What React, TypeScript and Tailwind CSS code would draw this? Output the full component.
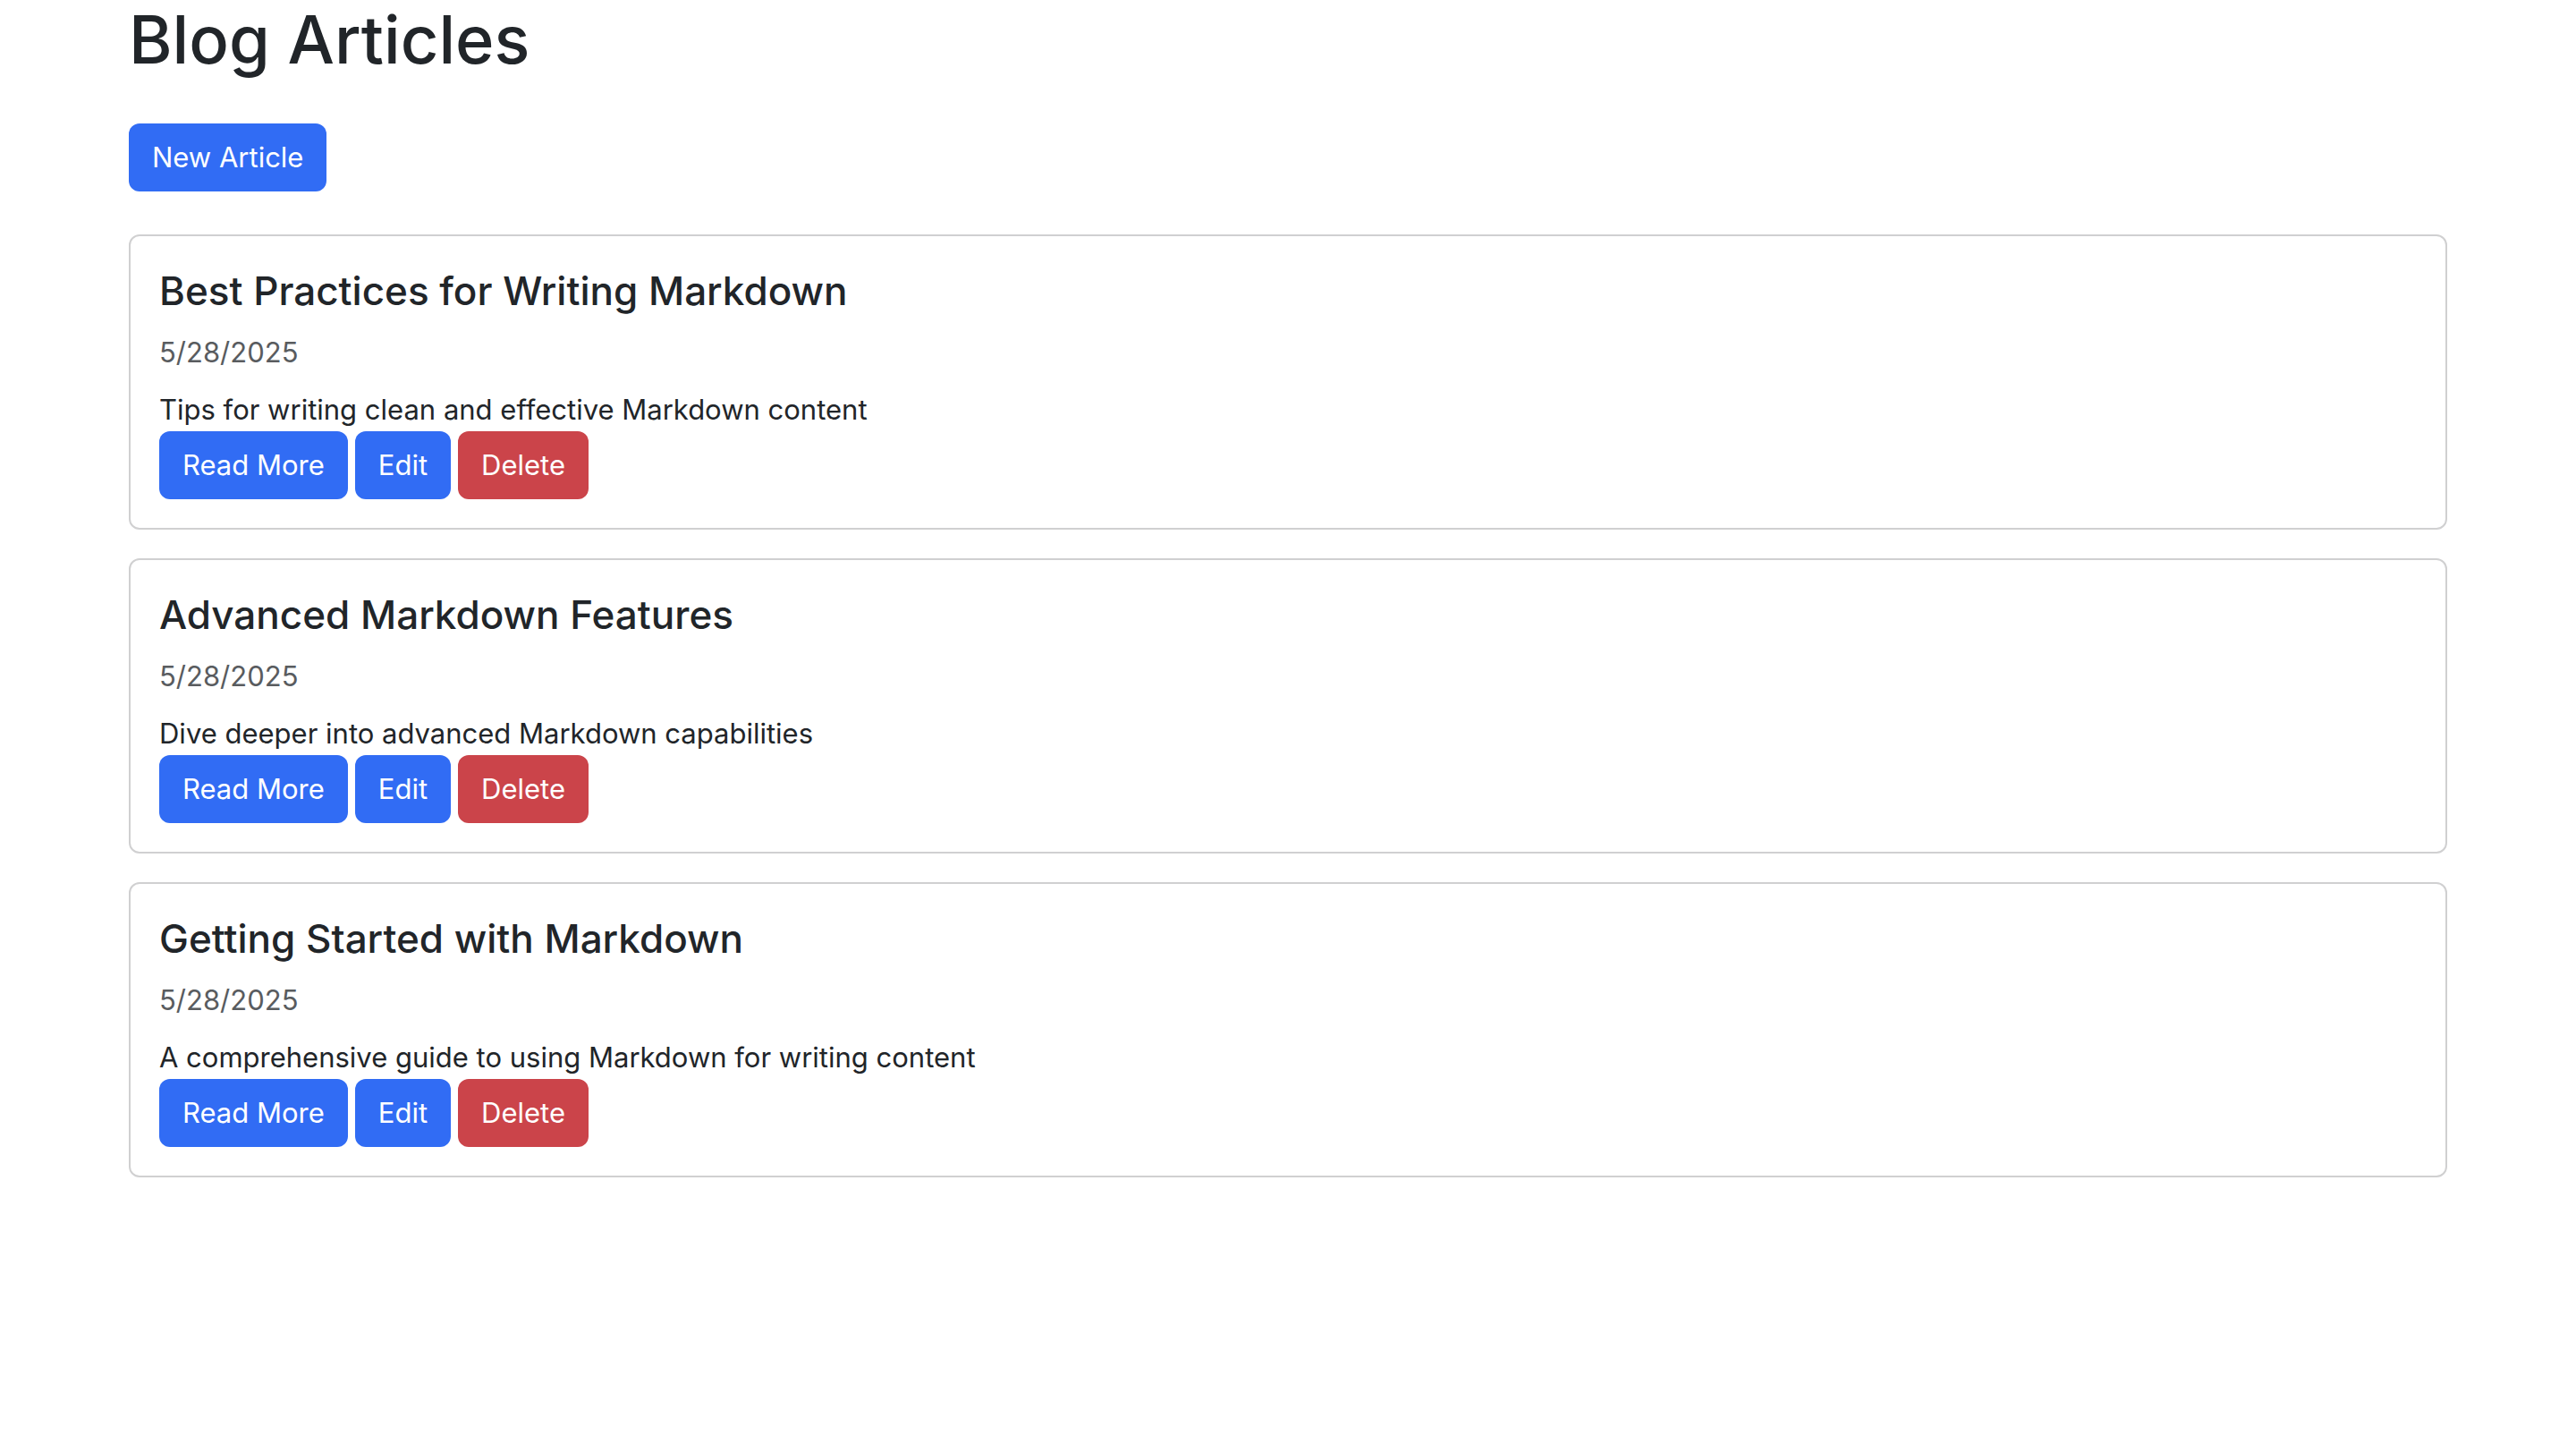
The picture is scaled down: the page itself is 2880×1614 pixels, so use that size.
const articles = [
  { title: "Best Practices for Writing Markdown", date: "5/28/2025", description: "Tips for writing clean and effective Markdown content" },
  { title: "Advanced Markdown Features", date: "5/28/2025", description: "Dive deeper into advanced Markdown capabilities" },
  { title: "Getting Started with Markdown", date: "5/28/2025", description: "A comprehensive guide to using Markdown for writing content" },
];

const button = "inline-flex items-center rounded-xl px-[26px] py-[14px] text-[31px] leading-[48px] text-white";

export default function App() {
  return (
    <main className="mx-[5%] font-['Inter',sans-serif] text-[#212529]">
      <h1 className="mb-[50px] text-[74px] leading-[88px] font-medium">Blog Articles</h1>
      <div className="mb-12 flex">
        <a href="#new" className={`${button} bg-[#316cf4]`}>New Article</a>
      </div>
      <div className="flex flex-col gap-8">
        {articles.map((article) => (
          <article key={article.title} className="rounded-xl border-2 border-[#d0d0d1] p-8">
            <h2 className="mb-4 text-[44px] leading-[58px] font-medium">{article.title}</h2>
            <p className="mb-4 text-[31px] leading-[48px] text-[#595c5f]">{article.date}</p>
            <p className="text-[31px] leading-[48px]">{article.description}</p>
            <div className="flex gap-2">
              <a href="#read" className={`${button} bg-[#316cf4]`}>Read More</a>
              <a href="#edit" className={`${button} bg-[#316cf4]`}>Edit</a>
              <button type="button" className={`${button} bg-[#cb444a]`}>Delete</button>
            </div>
          </article>
        ))}
      </div>
    </main>
  );
}
